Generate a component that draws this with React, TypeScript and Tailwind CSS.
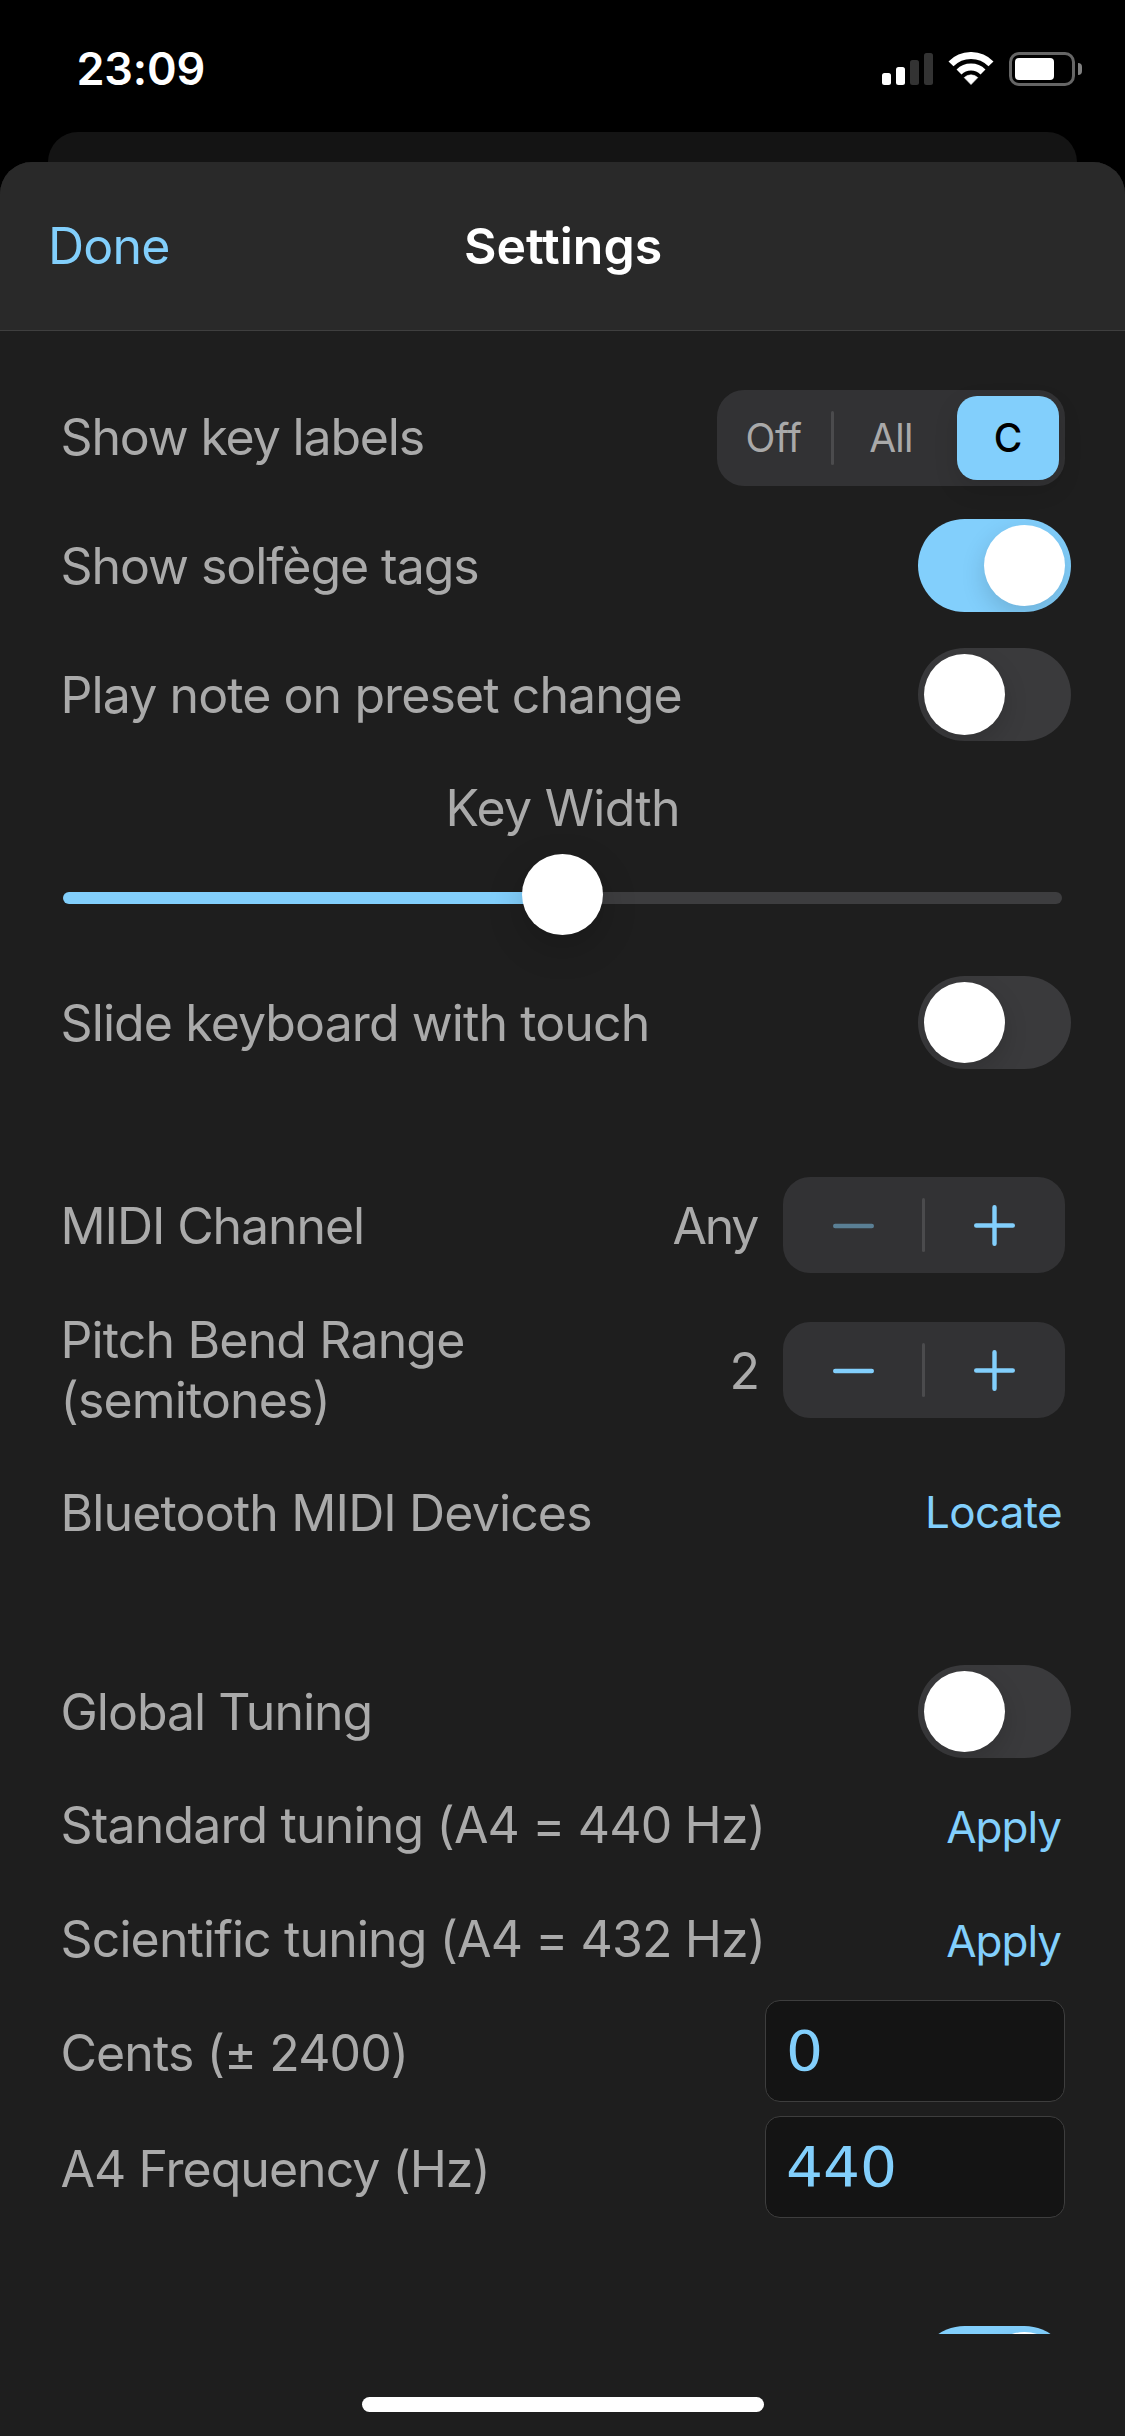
import React from "react";

const LABEL = "text-[50px] leading-[60px] text-[#aaaaaa]";

function StatusBar() {
  return (
    <div className="flex h-[132px] items-start justify-between pl-[76.5px] pr-[43px] pt-[52px]">
      <span className="-mt-[10px] text-[45px] font-semibold leading-[54px] tracking-[-0.2px] text-white">23:09</span>
      <div className="flex h-[34px] items-start">
        <div className="mr-[15px] flex h-[33px] items-end gap-[5px]">
          <span className="h-3 w-[9px] rounded-[2.5px] bg-white" />
          <span className="h-[18px] w-[9px] rounded-[2.5px] bg-white" />
          <span className="h-[25px] w-[9px] rounded-[2.5px] bg-[#333333]" />
          <span className="h-8 w-[9px] rounded-[2.5px] bg-[#333333]" />
        </div>
        <svg width="46" height="33" viewBox="0 0 46 33" className="mr-[15px]" fill="none" stroke="#fff">
          <path d="M3 11.9 A28 28 0 0 1 43 11.9" strokeWidth="7" />
          <path d="M11 20 A17 17 0 0 1 35 20" strokeWidth="7" />
          <path d="M23 32.6 L16.2 25.6 A9.8 9.8 0 0 1 29.8 25.6 Z" fill="#fff" strokeWidth="0.6" />
        </svg>
        <div className="flex h-[34px] items-center gap-[3px] pr-0">
          <div className="h-[34px] w-[66px] rounded-[10px] border-[3px] border-[#666666] p-[3px]">
            <div className="h-[22px] w-[39px] rounded-[4px] bg-white" />
          </div>
          <div className="h-3 w-1 rounded-r-full bg-[#808080]" />
        </div>
      </div>
    </div>
  );
}

function Toggle({ on = false }: { on?: boolean }) {
  return (
    <div
      className={`-mr-1.5 flex h-[93px] w-[153px] shrink-0 items-center overflow-hidden rounded-full p-1.5 ${
        on ? "justify-end bg-[#82cffc]" : "justify-start bg-[#3a3a3c]"
      }`}
    >
      <div className="size-[81px] rounded-full bg-white shadow-[0_9px_24px_rgba(0,0,0,0.15)]" />
    </div>
  );
}

function Row({ className, label, tracking, children }: {
  className: string;
  label: string;
  tracking: string;
  children?: React.ReactNode;
}) {
  return (
    <div className={`flex items-center justify-between ${className}`}>
      <span className={`whitespace-pre-line ${LABEL} ${tracking}`}>{label}</span>
      {children}
    </div>
  );
}

function Segmented() {
  return (
    <div className="flex h-24 w-[348px] items-center rounded-[27px] bg-[#323234] p-1.5 text-[39px] leading-[48px] text-[#a9a9a9]">
      <span className="w-[108px] pr-[7px] text-center tracking-[-0.4px]">Off</span>
      <span className="h-[54px] w-[3px] rounded-full bg-[#4b4b4d]" />
      <span className="w-[114px] text-center tracking-[-0.7px]">All</span>
      <span className="ml-[9px] flex h-[84px] w-[102px] shrink-0 items-center justify-center rounded-[20px] bg-[#82cffc] font-medium text-black shadow-[0_9px_24px_rgba(0,0,0,0.12)]">
        C
      </span>
    </div>
  );
}

function Stepper({ value, minusDisabled, tracking }: { value: string; minusDisabled?: boolean; tracking: string }) {
  return (
    <div className="flex items-center gap-6">
      <span className={`${LABEL} ${tracking}`}>{value}</span>
      <div className="flex h-24 w-[282px] items-center rounded-[27px] bg-[#323234]">
        <div className="flex w-[139px] justify-center pl-[2px]">
          <svg width="41" height="41" viewBox="0 0 41 41" strokeWidth="4.4" strokeLinecap="round" className={minusDisabled ? "stroke-[#5a7f94]" : "stroke-[#82cffc]"}>
            <path d="M2.2 21H38.8" />
          </svg>
        </div>
        <span className="h-[54px] w-[3px] rounded-full bg-[#4b4b4d]" />
        <div className="flex flex-1 justify-center pr-[2px]">
          <svg width="41" height="41" viewBox="0 0 41 41" strokeWidth="4.4" strokeLinecap="round" className="stroke-[#82cffc]">
            <path d="M2.2 20.5H38.8M20.5 2.2V38.8" />
          </svg>
        </div>
      </div>
    </div>
  );
}

function Link({ children, className }: { children: string; className: string }) {
  return <button className={`text-[44px] leading-[54px] text-[#82cffc] ${className}`}>{children}</button>;
}

function Field({ value }: { value: string }) {
  return (
    <div className="flex h-[102px] w-[300px] items-center rounded-[15px] border border-[#3e3e3e] bg-[#141414] pl-5 font-['DejaVu_Sans',sans-serif] text-[56px] leading-[66px] text-[#82cffc]">
      <span className="origin-left scale-x-[1.04]">{value}</span>
    </div>
  );
}

export default function App() {
  return (
    <div className="flex h-[2436px] w-[1125px] flex-col overflow-hidden bg-black font-[Inter,sans-serif]">
      <StatusBar />
      <div className="mx-12 h-[30px] shrink-0 rounded-t-[30px] bg-[#141414]" />
      <div className="flex flex-1 flex-col overflow-hidden rounded-t-[32px] bg-[#1e1e1e]">
        <header className="grid h-[169px] shrink-0 grid-cols-3 items-center border-b border-[#3f3f3f] bg-[#292929] px-12 pb-px text-[50px] leading-[60px]">
          <button className="text-left tracking-[-0.8px] text-[#82cffc]">Done</button>
          <h1 className="pl-px text-center font-semibold text-white">Settings</h1>
        </header>

        <main className="flex h-[2003px] shrink-0 flex-col overflow-hidden pl-[60.5px] pr-[60px]">
          <Row className="mt-[59px] h-24" label="Show key labels" tracking="tracking-[-1.15px] -mt-0.5">
            <Segmented />
          </Row>
          <Row className="mt-[33px] h-[93px]" label="Show solfège tags" tracking="tracking-[-1.05px]">
            <Toggle on />
          </Row>
          <Row className="mt-9 h-[93px]" label="Play note on preset change" tracking="tracking-[-0.91px]">
            <Toggle />
          </Row>

          <div className={`mt-[37px] text-center tracking-[-0.7px] ${LABEL}`}>Key Width</div>
          <div className="relative mt-4 h-[81px] shrink-0">
            <div className="ml-[2.5px] mr-[3px] flex h-full items-center pt-[7px]">
              <div className="h-3 w-1/2 rounded-l-full bg-[#82cffc]" />
              <div className="h-3 w-1/2 rounded-r-full bg-[#3d3d3f]" />
            </div>
            <div className="absolute left-[461.5px] top-0 size-[81px] rounded-full bg-white shadow-[0_12px_36px_rgba(0,0,0,0.18)]" />
          </div>
          <Row className="mt-[41px] h-[93px]" label="Slide keyboard with touch" tracking="tracking-[-0.9px]">
            <Toggle />
          </Row>

          <Row className="mt-[108px] h-24" label="MIDI Channel" tracking="tracking-[-1.1px] mt-0.5">
            <Stepper value="Any" minusDisabled tracking="tracking-[-2.3px] mt-0.5 mr-0.5" />
          </Row>
          <Row className="mt-[37px] h-[120px]" label={"Pitch Bend Range\n(semitones)"} tracking="tracking-[-0.85px]">
            <Stepper value="2" tracking="mt-0.5 -mr-px" />
          </Row>
          <Row className="mt-[53px] h-[60px]" label="Bluetooth MIDI Devices" tracking="tracking-[-0.86px]">
            <Link className="-mt-0.5 mr-[3px] tracking-[-0.7px]">Locate</Link>
          </Row>

          <Row className="mt-[122px] h-[93px]" label="Global Tuning" tracking="tracking-[-1px]">
            <Toggle />
          </Row>
          <Row className="mt-[37px] h-[60px]" label="Standard tuning (A4 = 440 Hz)" tracking="tracking-[-0.84px]">
            <Link className="mt-1 mr-1 tracking-[-1px]">Apply</Link>
          </Row>
          <Row className="mt-[54px] h-[60px]" label="Scientific tuning (A4 = 432 Hz)" tracking="tracking-[-0.88px]">
            <Link className="mt-1 mr-1 tracking-[-1px]">Apply</Link>
          </Row>
          <Row className="mt-[31px] h-[102px]" label="Cents (± 2400)" tracking="tracking-[-0.9px] mt-1">
            <Field value="0" />
          </Row>
          <Row className="mt-3.5 h-[102px]" label="A4 Frequency (Hz)" tracking="tracking-[-0.98px] mt-1">
            <Field value="440" />
          </Row>
          <div className="mt-[108px] flex justify-end">
            <Toggle on />
          </div>
        </main>

        <div className="mx-auto mt-[63px] h-[15px] w-[402px] rounded-full bg-white" />
      </div>
    </div>
  );
}
